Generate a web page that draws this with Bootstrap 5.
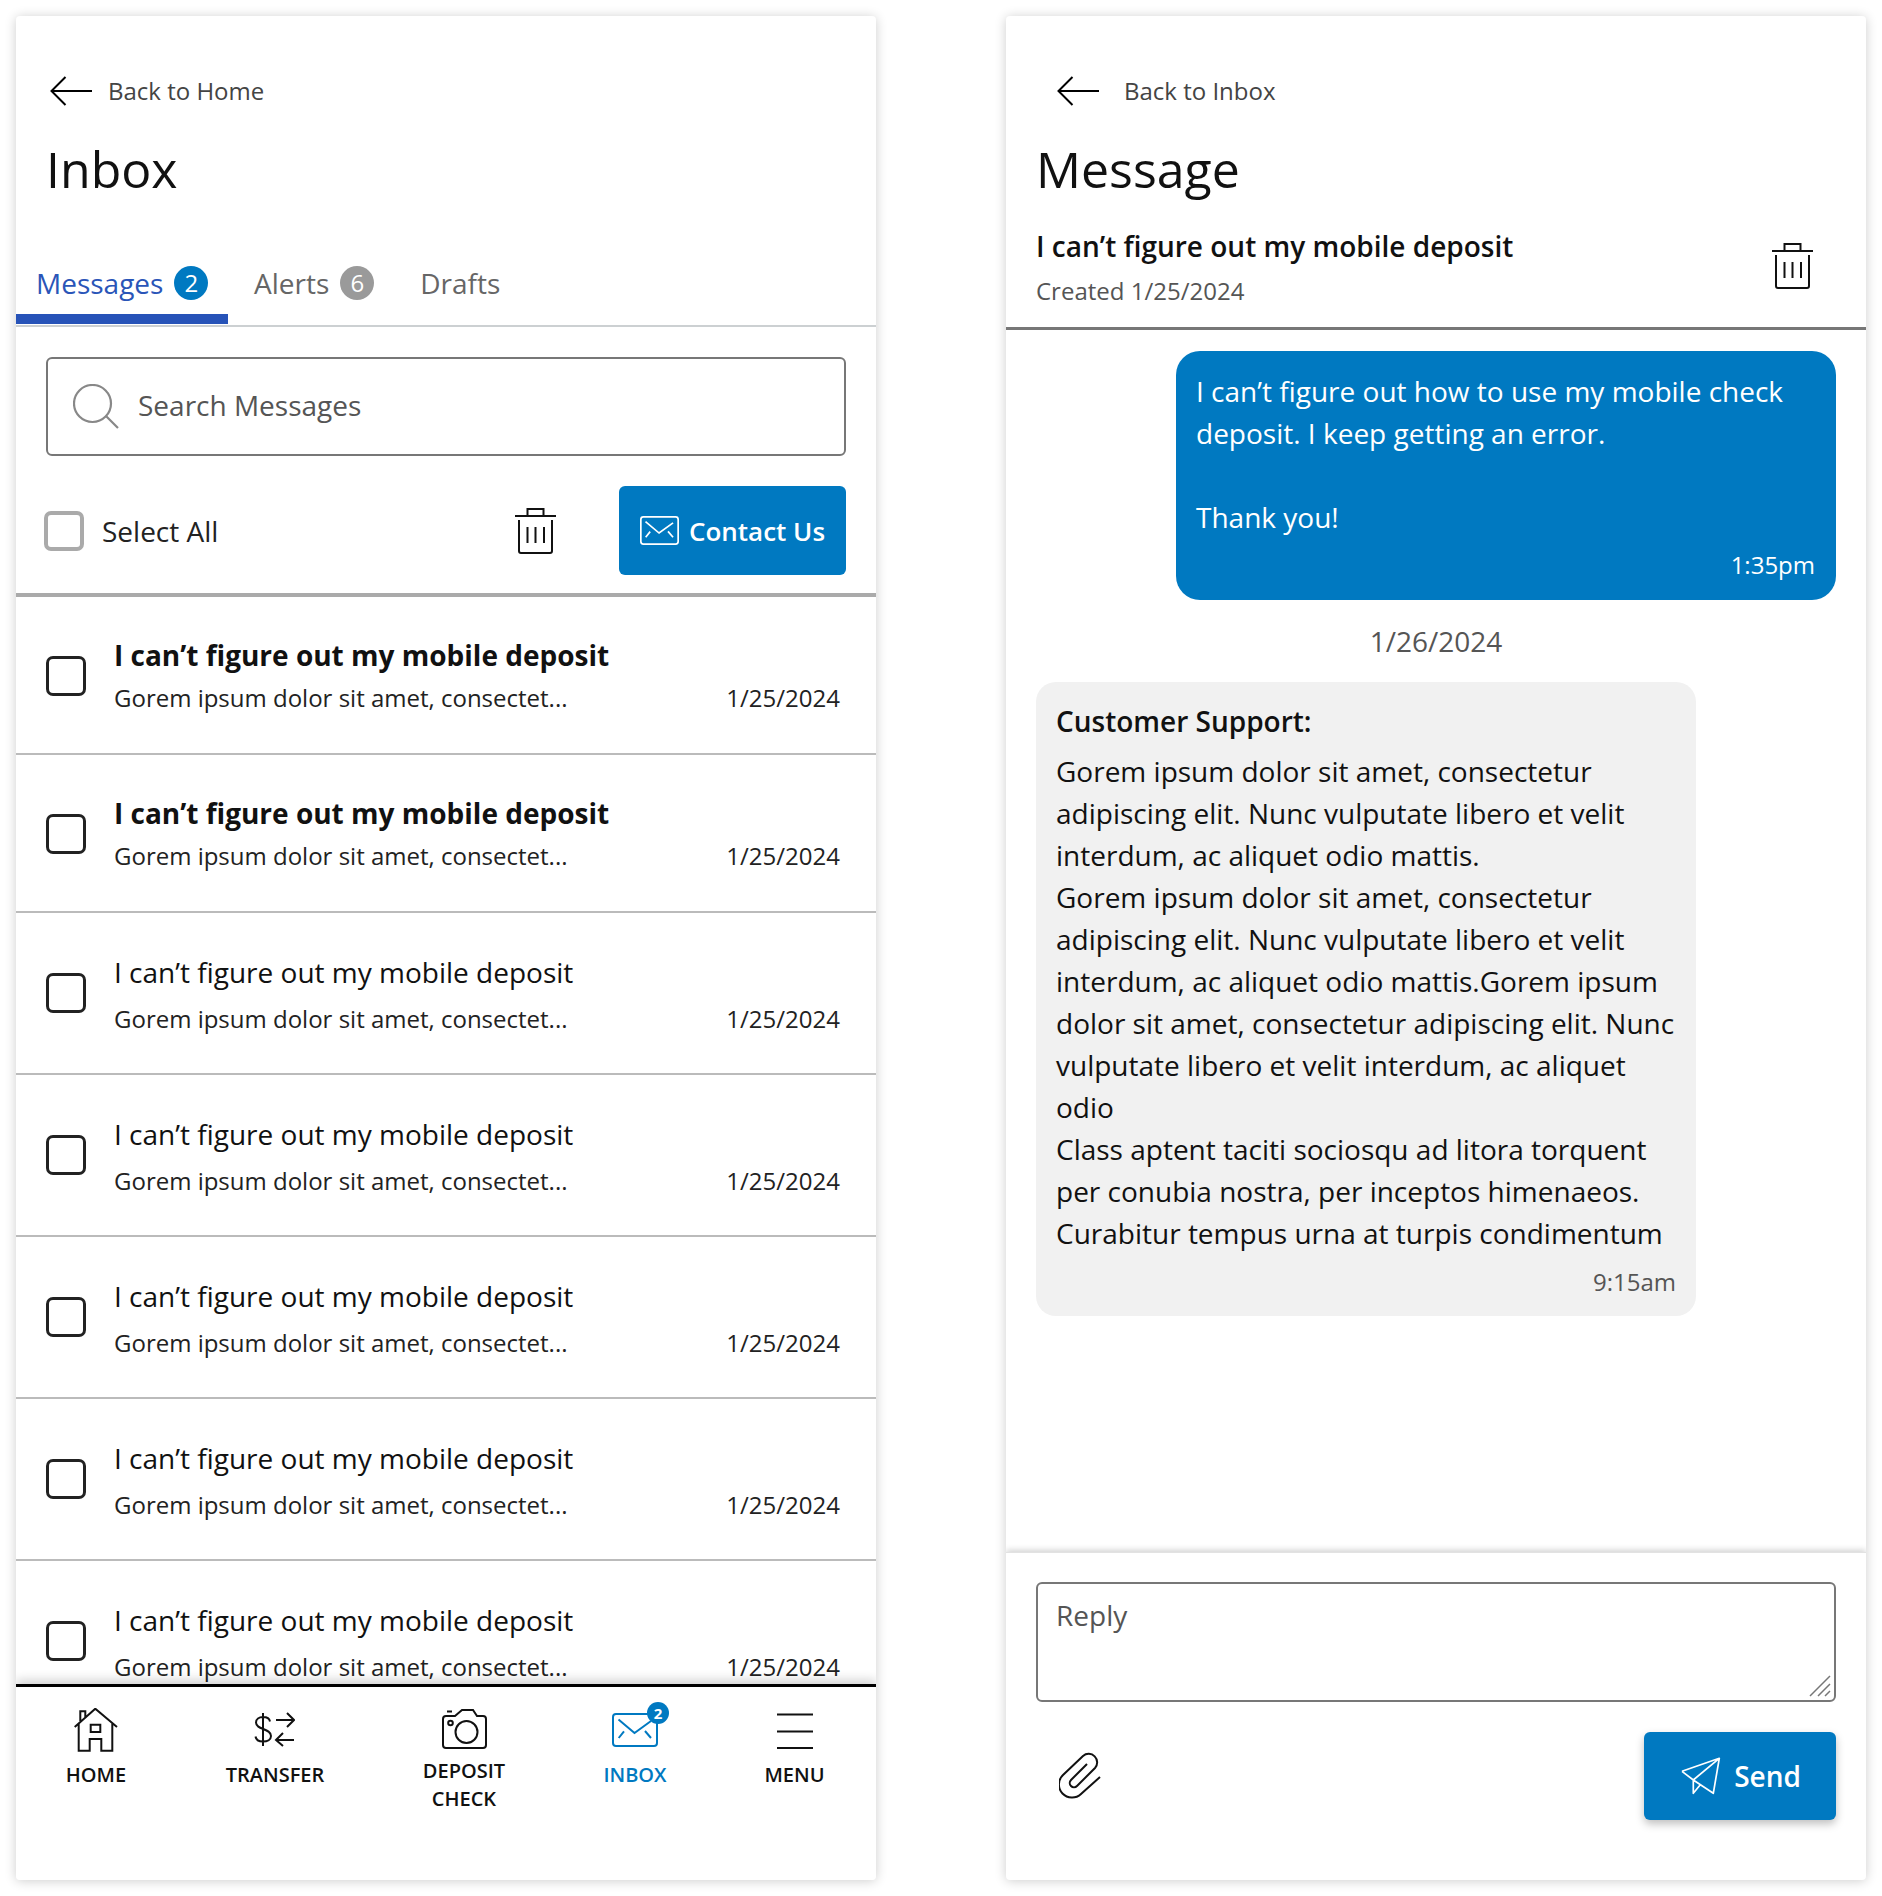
<!DOCTYPE html>
<html lang="en">
<head>
<meta charset="utf-8">
<title>Inbox and Message</title>
<link href="https://cdn.jsdelivr.net/npm/bootstrap@5.3.0/dist/css/bootstrap.min.css" rel="stylesheet">
<style>
:root { --blue: #0079c1; --ink: #111; --muted: #555; }
html, body { background: #fff; }
body { font-family: "Open Sans", "Liberation Sans", sans-serif; color: var(--ink); font-size: 28px; line-height: 42px; width: 1882px; height: 1896px; overflow: hidden; }
.stage { display: flex; gap: 130px; padding: 16px; height: 1896px; }
.phone { width: 860px; height: 1864px; background: #fff; border-radius: 4px; box-shadow: 0 1px 12px rgba(0,0,0,.2); display: flex; flex-direction: column; overflow: hidden; flex: none; }
.back-row { display: flex; align-items: center; height: 41px; margin-top: 54px; padding-left: 34px; gap: 16px; font-size: 24px; color: #444; flex: none; }
.back-row.inset { padding-left: 51px; gap: 25px; }
.page-title { font-size: 50px; font-weight: 400; line-height: 72px; margin: 22px 0 0 30px; color: var(--ink); flex: none; }
.tabs-bar { display: flex; align-items: flex-start; height: 70px; margin-top: 52px; border-bottom: 2px solid #ccd0d2; font-size: 28px; color: #666; flex: none; }
.tab-item { height: 67px; padding: 0 0 15px 20px; display: flex; align-items: center; gap: 11px; }
.tab-item.current { color: #2a55b8; border-bottom: 10px solid #2753b8; width: 212px; padding-bottom: 5px; flex: none; }
.tab-item.second { margin-left: 6px; }
.tab-item.third { margin-left: 26px; }
.count-dot { width: 34px; height: 34px; border-radius: 50%; background: #9a9a9a; color: #fff; font-size: 24px; line-height: 34px; text-align: center; display: inline-block; }
.current .count-dot { background: var(--blue); }
.search-box { margin: 30px 30px 0 30px; height: 99px; border: 2px solid #777; border-radius: 6px; display: flex; align-items: center; padding-left: 25px; gap: 19px; flex: none; }
.search-box input { border: 0; outline: 0; flex: 1; font-size: 28px; color: #444; padding: 0; margin-bottom: 3px; background: transparent; box-shadow: none; }
.search-box input::placeholder, .reply-box::placeholder { color: #555; opacity: 1; }
.tool-row { display: flex; align-items: center; height: 89px; margin: 30px 30px 18px 28px; flex: none; }
.box-check.form-check-input { width: 40px; height: 40px; margin: 0; border: 3px solid #222; border-radius: 7px; flex: none; background-color: #fff; }
.box-check.pale.form-check-input { border: 4px solid #aaa; }
.select-text { margin-left: 18px; flex: 1; font-size: 28px; color: #222; }
.trash-gap { margin-right: 62px; }
.blue-btn.btn { background: var(--blue); border: 0; color: #fff; font-size: 28px; font-weight: 600; line-height: 42px; border-radius: 6px; display: flex; align-items: center; justify-content: center; }
.contact-btn.btn { width: 227px; height: 89px; gap: 10px; padding: 0; font-size: 26px; }
.msg-list { flex: 1; overflow: hidden; border-top: 4px solid #aaa; min-height: 0; }
.msg-item { display: flex; align-items: flex-start; border-bottom: 2px solid #bbb; height: 162px; padding: 38px 36px 0 30px; }
.msg-item.unread { height: 158px; padding-top: 37px; }
.msg-item .box-check { margin-top: 22px; margin-right: 28px; }
.msg-body { flex: 1; min-width: 0; }
.msg-title { font-size: 28px; line-height: 42px; color: var(--ink); }
.unread .msg-title { font-weight: 700; }
.msg-meta { display: flex; justify-content: space-between; font-size: 24px; line-height: 36px; margin-top: 8px; color: #222; }
.unread .msg-meta { margin-top: 4px; }
.bottom-nav { height: 196px; flex: none; display: flex; border-top: 3px solid #000; box-shadow: 0 -4px 10px rgba(0,0,0,.18); position: relative; background: #fff; }
.nav-cell { display: flex; flex-direction: column; align-items: center; font-size: 20px; font-weight: 600; line-height: 28px; text-align: center; color: var(--ink); position: relative; }
.nav-cell svg { display: block; }
.cell-a { width: 160px; } .cell-b { width: 198px; } .cell-c { width: 180px; } .cell-d { width: 162px; } .cell-e { width: 157px; }
.icon-zone { height: 53px; margin-top: 21px; display: flex; align-items: flex-start; justify-content: center; position: relative; width: 100%; }
.nudge-transfer { margin: 4px 0 0 -2px; }
.nudge-camera { margin-top: 1px; }
.nudge-mail { margin-top: 5px; }
.nudge-menu { margin-top: 5px; }
.nav-cell .label-two { margin-top: -4px; }
.cell-d { color: var(--blue); }
.mini-badge { position: absolute; top: -6px; left: 50%; margin-left: 12px; width: 22px; height: 22px; border-radius: 50%; background: var(--blue); color: #fff; font-size: 15px; font-weight: 700; line-height: 22px; text-align: center; }
.thread-head { display: flex; justify-content: space-between; padding: 0 30px; margin-top: 20px; border-bottom: 3px solid #777; flex: none; height: 105px; }
.subject { font-size: 28px; font-weight: 600; line-height: 42px; }
.created { font-size: 24px; line-height: 36px; color: var(--muted); margin-top: 6px; }
.head-trash { margin: 18px 22px 0 0; }
.thread-body { flex: 1; padding: 21px 30px 0; display: flex; flex-direction: column; min-height: 0; }
.bubble-out { align-self: flex-end; width: 660px; background: var(--blue); color: #fff; border-radius: 24px; padding: 19px 21px 12px 20px; height: 249px; }
.bubble-in { width: 660px; background: #f1f1f1; border-radius: 20px; padding: 18px 20px 14px 20px; height: 634px; }
.bubble-in p { margin: 0; }
.stamp { font-size: 24px; line-height: 36px; text-align: right; }
.bubble-in .stamp { color: #555; margin-top: 10px; }
.bubble-out .stamp { margin-top: 9px; }
.day-mark { text-align: center; color: #555; margin: 20px 0 20px; line-height: 42px; }
.sender { font-weight: 600; margin-bottom: 8px !important; }
.reply-zone { flex: none; height: 328px; padding: 29px 30px 0; box-shadow: 0 -2px 6px rgba(0,0,0,.18); border-top: 1px solid #e2e2e2; position: relative; }
.reply-wrap { position: relative; height: 120px; }
.reply-box.form-control { height: 120px; font-size: 28px; line-height: 42px; border: 2px solid #777; border-radius: 6px; padding: 10px 18px; resize: none; color: #444; box-shadow: none; }
.grip { position: absolute; right: 5px; bottom: 5px; }
.reply-actions { display: flex; justify-content: space-between; align-items: flex-start; margin-top: 30px; }
.send-btn.btn { width: 192px; height: 88px; gap: 13px; padding: 0 0 0 2px; box-shadow: 0 4px 8px rgba(0,0,0,.25); }
.clip-icon { margin: 20px 0 0 23px; }
</style>
</head>
<body>
<svg width="0" height="0" class="d-block" aria-hidden="true">
  <defs>
    <symbol id="ic-back" viewBox="0 0 42 30"><path d="M42 15H1.500M15.500 1 1.500 15l14 14" fill="none" stroke="currentColor" stroke-width="2"/></symbol>
    <symbol id="ic-trash" viewBox="0 0 42 46"><path d="M0 8h41M12.500 8V1h16v7M4 12v31q0 2 2 2h29q2 0 2-2V12M12.500 19v16M20.500 19v16M29 19v16" fill="none" stroke="#111" stroke-width="2"/></symbol>
    <symbol id="ic-mail" viewBox="0 0 46 34"><rect x="1" y="1" width="44" height="32" rx="3" fill="none" stroke="currentColor" stroke-width="2"/><path d="M6.500 6.500 22.500 20 39 8M6.700 25 12 18.300M39 25l-6-7" fill="none" stroke="currentColor" stroke-width="2"/></symbol>
  </defs>
</svg>
<div class="stage">
  <section class="phone">
    <div class="back-row"><svg width="42" height="30" class="text-black"><use href="#ic-back"/></svg><span>Back to Home</span></div>
    <h1 class="page-title">Inbox</h1>
    <div class="tabs-bar">
      <div class="tab-item current"><span>Messages</span><span class="count-dot">2</span></div>
      <div class="tab-item second"><span>Alerts</span><span class="count-dot">6</span></div>
      <div class="tab-item third"><span>Drafts</span></div>
    </div>
    <div class="search-box">
      <svg width="46" height="46" viewBox="0 0 46 46"><circle cx="19.500" cy="19.500" r="18.500" fill="none" stroke="#888" stroke-width="2.200"/><path d="M33 32l12 12" stroke="#888" stroke-width="2.200"/></svg>
      <input type="text" class="form-control" placeholder="Search Messages" aria-label="Search Messages">
    </div>
    <div class="tool-row">
      <input class="form-check-input box-check pale" type="checkbox" aria-label="Select All">
      <span class="select-text">Select All</span>
      <svg width="42" height="46" class="trash-gap"><use href="#ic-trash"/></svg>
      <button class="btn blue-btn contact-btn" type="button"><svg width="39" height="29"><use href="#ic-mail"/></svg>Contact Us</button>
    </div>
    <div class="msg-list">
      <div class="msg-item unread"><input class="form-check-input box-check" type="checkbox" aria-label="Select"><div class="msg-body"><div class="msg-title">I can’t figure out my mobile deposit</div><div class="msg-meta"><span>Gorem ipsum dolor sit amet, consectet...</span><span>1/25/2024</span></div></div></div>
      <div class="msg-item unread"><input class="form-check-input box-check" type="checkbox" aria-label="Select"><div class="msg-body"><div class="msg-title">I can’t figure out my mobile deposit</div><div class="msg-meta"><span>Gorem ipsum dolor sit amet, consectet...</span><span>1/25/2024</span></div></div></div>
      <div class="msg-item"><input class="form-check-input box-check" type="checkbox" aria-label="Select"><div class="msg-body"><div class="msg-title">I can’t figure out my mobile deposit</div><div class="msg-meta"><span>Gorem ipsum dolor sit amet, consectet...</span><span>1/25/2024</span></div></div></div>
      <div class="msg-item"><input class="form-check-input box-check" type="checkbox" aria-label="Select"><div class="msg-body"><div class="msg-title">I can’t figure out my mobile deposit</div><div class="msg-meta"><span>Gorem ipsum dolor sit amet, consectet...</span><span>1/25/2024</span></div></div></div>
      <div class="msg-item"><input class="form-check-input box-check" type="checkbox" aria-label="Select"><div class="msg-body"><div class="msg-title">I can’t figure out my mobile deposit</div><div class="msg-meta"><span>Gorem ipsum dolor sit amet, consectet...</span><span>1/25/2024</span></div></div></div>
      <div class="msg-item"><input class="form-check-input box-check" type="checkbox" aria-label="Select"><div class="msg-body"><div class="msg-title">I can’t figure out my mobile deposit</div><div class="msg-meta"><span>Gorem ipsum dolor sit amet, consectet...</span><span>1/25/2024</span></div></div></div>
      <div class="msg-item"><input class="form-check-input box-check" type="checkbox" aria-label="Select"><div class="msg-body"><div class="msg-title">I can’t figure out my mobile deposit</div><div class="msg-meta"><span>Gorem ipsum dolor sit amet, consectet...</span><span>1/25/2024</span></div></div></div>
    </div>
    <nav class="bottom-nav">
      <div class="nav-cell cell-a"><div class="icon-zone"><svg width="44" height="44" viewBox="0 0 44 44"><path d="M.7 19 21.300.7 43 19M4.700 15.500V42.700h11V31h11.600v11.700h11V15.500M6.300 13V3.300h5V9M16.700 16.700h9.600V24h-9.600z" fill="none" stroke="#111" stroke-width="2"/></svg></div><span>HOME</span></div>
      <div class="nav-cell cell-b"><div class="icon-zone"><svg class="nudge-transfer" width="41" height="35" viewBox="0 0 41 35"><path d="M16 9.500C15.500 6.500 12.500 5 9 5 5 5 2 7 2 10.500 2 18 17 16 17 24c0 3.500-3.500 5.500-8 5.500-4 0-7-2-7.500-5M9 1v33" fill="none" stroke="#111" stroke-width="2"/><path d="M22 8h18M33 1l7 7-7 7M40 28H22M29 21l-7 7 7 6" fill="none" stroke="#111" stroke-width="2"/></svg></div><span>TRANSFER</span></div>
      <div class="nav-cell cell-c"><div class="icon-zone"><svg class="nudge-camera" width="45" height="40" viewBox="0 0 45 40"><path d="M4 7h9l7-6h11l4 6h6q3 0 3 3v26q0 3-3 3H4q-3 0-3-3V10q0-3 3-3zM5 2.500h5" fill="none" stroke="#111" stroke-width="2"/><circle cx="24.500" cy="23" r="11" fill="none" stroke="#111" stroke-width="2"/><circle cx="8.500" cy="14" r="2.300" fill="none" stroke="#111" stroke-width="2"/></svg></div><span class="label-two">DEPOSIT<br>CHECK</span></div>
      <div class="nav-cell cell-d"><div class="icon-zone"><svg class="nudge-mail" width="46" height="34"><use href="#ic-mail"/></svg><span class="mini-badge">2</span></div><span>INBOX</span></div>
      <div class="nav-cell cell-e"><div class="icon-zone"><svg class="nudge-menu" width="36" height="36" viewBox="0 0 36 36"><path d="M0 1.500h36M0 18.500h36M0 35h36" stroke="#111" stroke-width="2"/></svg></div><span>MENU</span></div>
    </nav>
  </section>

  <section class="phone">
    <div class="back-row inset"><svg width="42" height="30" class="text-black"><use href="#ic-back"/></svg><span>Back to Inbox</span></div>
    <h1 class="page-title">Message</h1>
    <div class="thread-head">
      <div><div class="subject">I can’t figure out my mobile deposit</div><div class="created">Created 1/25/2024</div></div>
      <svg width="42" height="46" class="head-trash"><use href="#ic-trash"/></svg>
    </div>
    <div class="thread-body">
      <div class="bubble-out">I can’t figure out how to use my mobile check deposit. I keep getting an error.<br><br>Thank you!<div class="stamp">1:35pm</div></div>
      <div class="day-mark">1/26/2024</div>
      <div class="bubble-in">
        <p class="sender">Customer Support:</p>
        <p>Gorem ipsum dolor sit amet, consectetur adipiscing elit. Nunc vulputate libero et velit interdum, ac aliquet odio mattis.</p>
        <p>Gorem ipsum dolor sit amet, consectetur adipiscing elit. Nunc vulputate libero et velit interdum, ac aliquet odio mattis.Gorem ipsum dolor sit amet, consectetur adipiscing elit. Nunc vulputate libero et velit interdum, ac aliquet odio</p>
        <p>Class aptent taciti sociosqu ad litora torquent per conubia nostra, per inceptos himenaeos. Curabitur tempus urna at turpis condimentum</p>
        <div class="stamp">9:15am</div>
      </div>
    </div>
    <div class="reply-zone">
      <div class="reply-wrap">
        <textarea class="form-control reply-box" placeholder="Reply" aria-label="Reply"></textarea>
        <svg class="grip" width="22" height="22" viewBox="0 0 22 22"><path d="M1 21 21 1M9 21 21 9M16 21l5-5" stroke="#777" stroke-width="1.500"/></svg>
      </div>
      <div class="reply-actions">
        <svg class="clip-icon" width="44" height="48" viewBox="0 0 44 48"><path d="M41 25 22 42A13 13 0 0 1 4 23L24 4A8.500 8.500 0 0 1 36 16L18 34A4 4 0 0 1 12 28L28 12" fill="none" stroke="#111" stroke-width="2"/></svg>
        <button class="btn blue-btn send-btn" type="button"><svg width="40" height="38" viewBox="0 0 40 38"><path d="M1 14.300 38.300 1.300 32.300 36.300 12.300 23 1 14.300M12.300 23 38.300 1.300M12.300 23V36.300L19.700 27.300" fill="none" stroke="#fff" stroke-width="1.700" stroke-linejoin="round"/></svg>Send</button>
      </div>
    </div>
  </section>
</div>
</body>
</html>
